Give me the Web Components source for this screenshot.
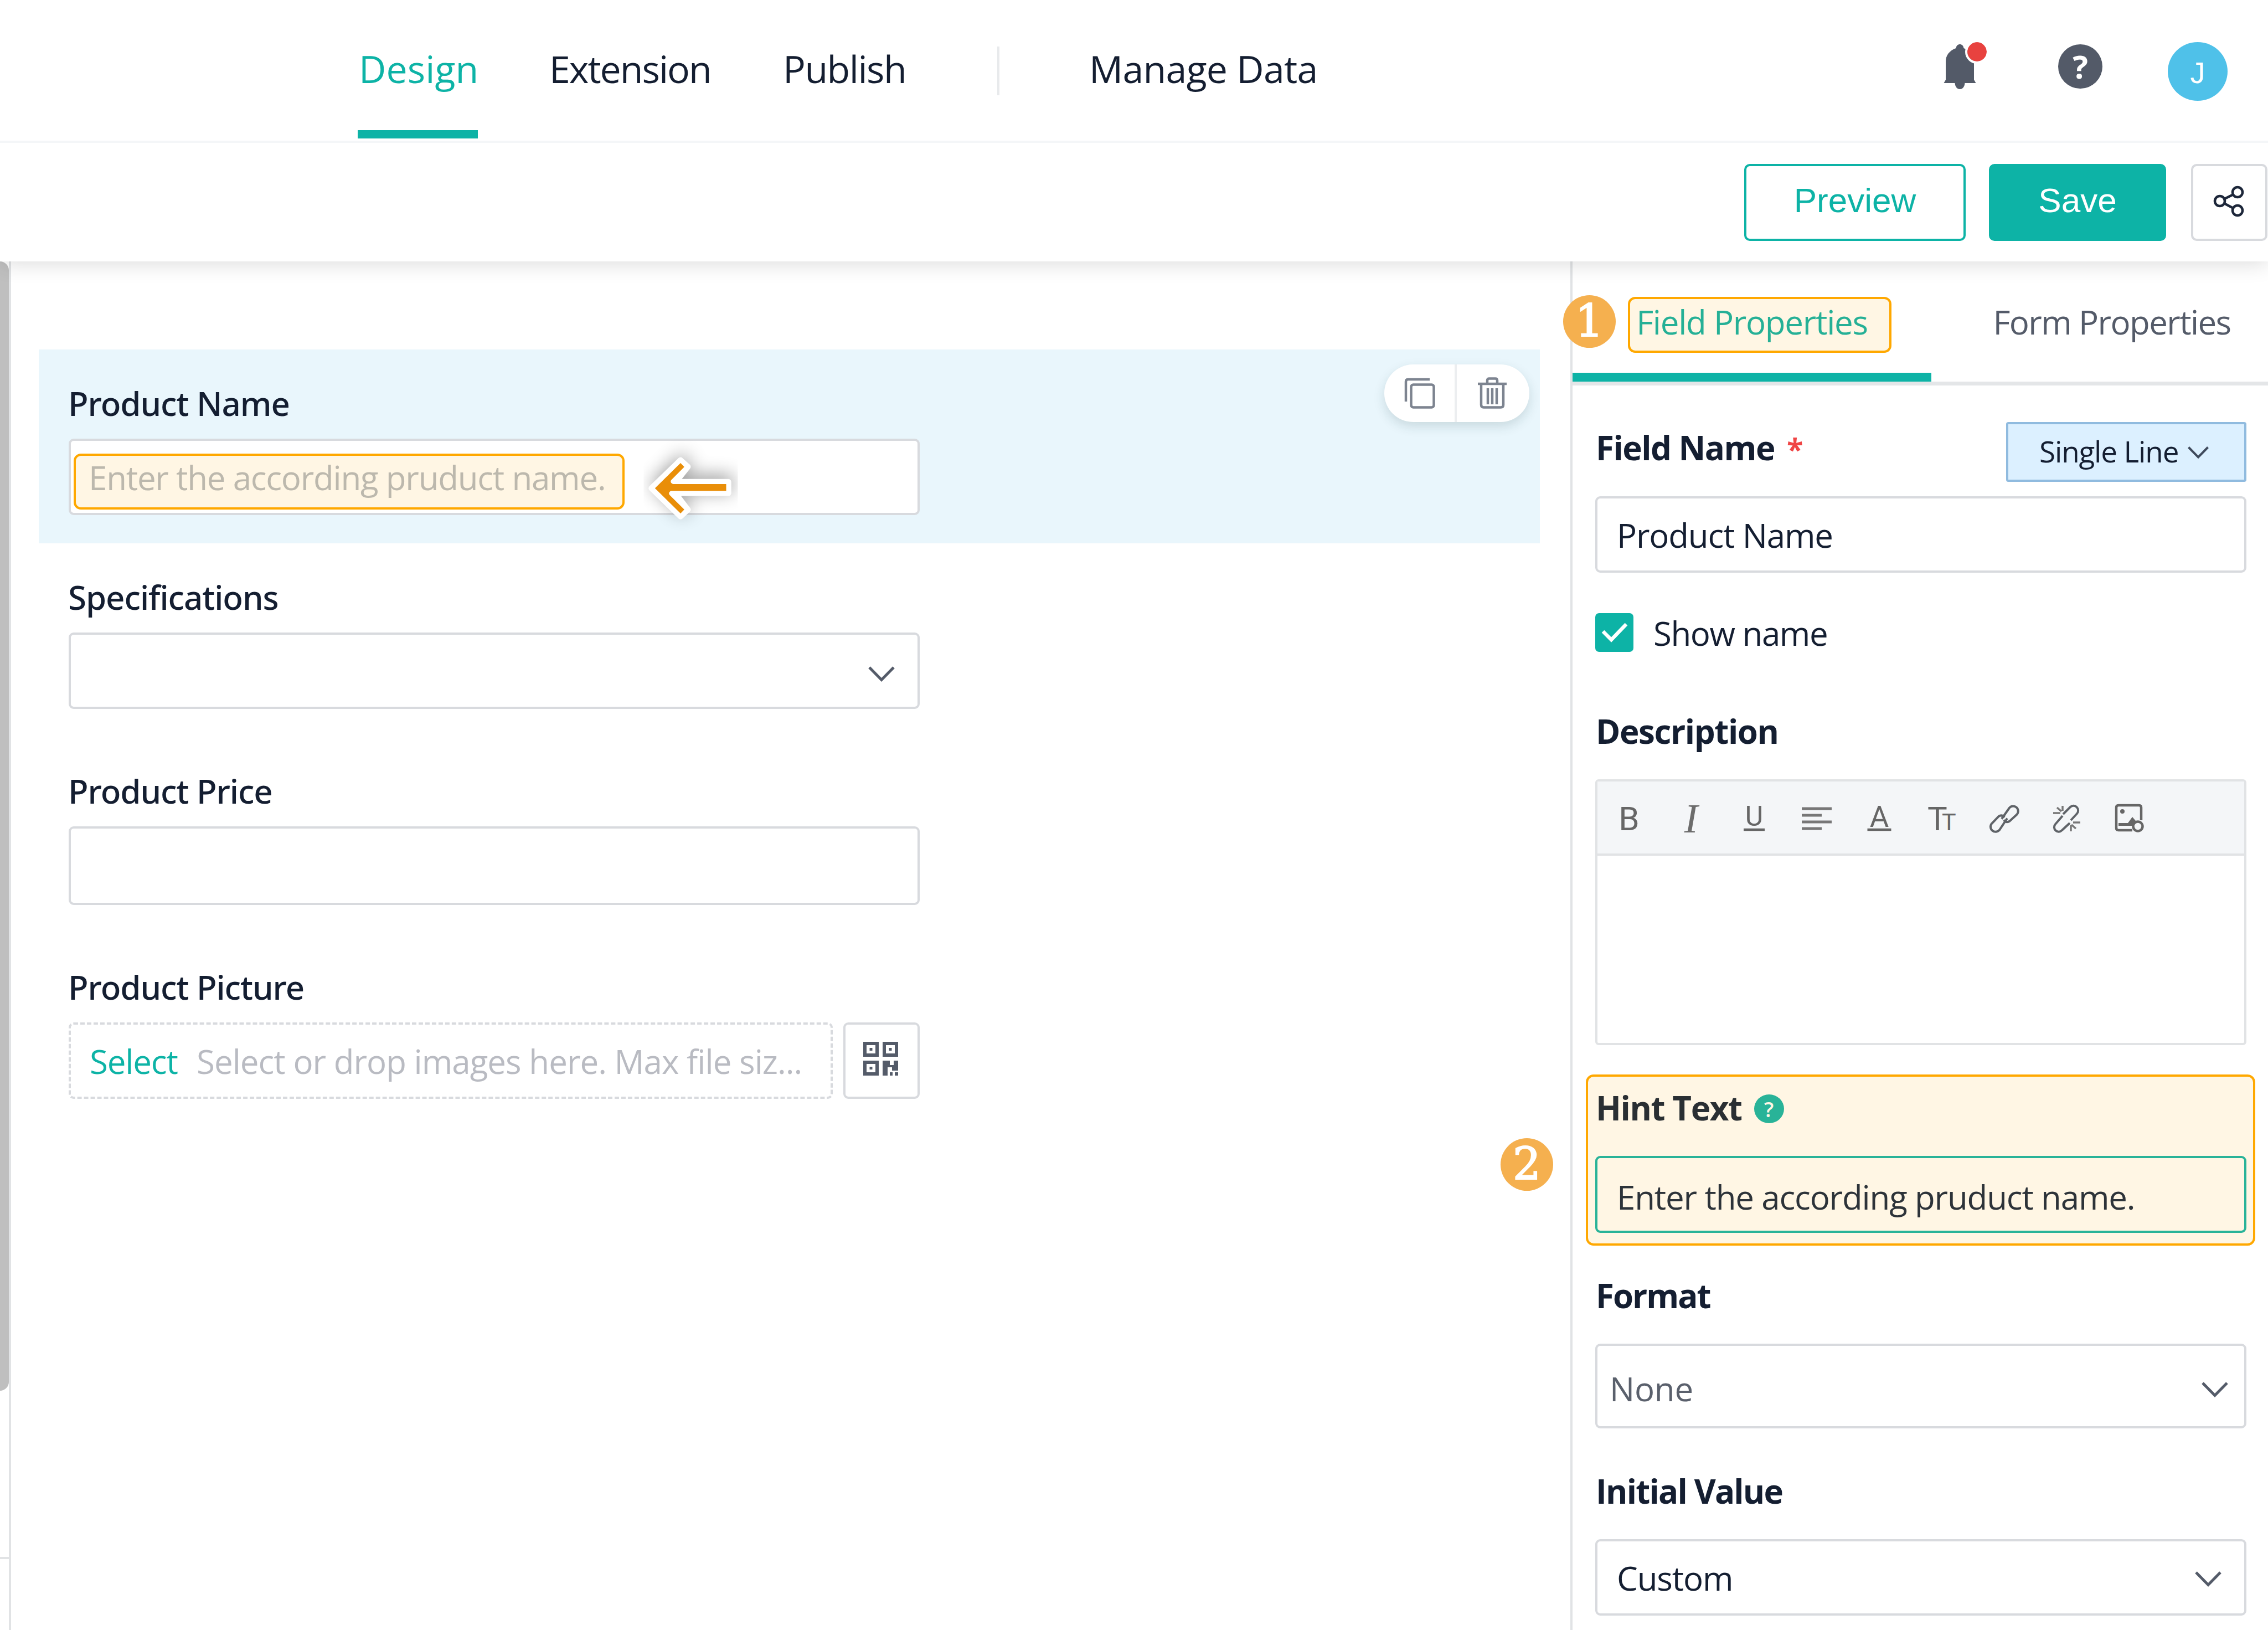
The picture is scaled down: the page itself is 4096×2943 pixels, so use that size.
<!DOCTYPE html>
<html lang="en">
<head>
<meta charset="utf-8">
<title>Form Designer</title>
<style>
  html, body {
    margin: 0;
    width: 4096px;
    height: 2943px;
    overflow: hidden;
    background: #fff;
  }

  body {
    font-family: "Open Sans", "Noto Sans", sans-serif;
    font-size: 60px;
    line-height: 82px;
    letter-spacing: -1.15px;
    color: #141e31;
    --accent: #0db3a6;
    --line: #e1e3e5;
    --border: #d8dade;
    --mark: #ffa800;
    --mark-fill: #fff6e4;
  }
</style>
</head>
<body>

<form-designer>
  <top-bar slot="header">
    <nav-tab active style="letter-spacing:.1px">Design</nav-tab>
    <nav-tab style="letter-spacing:-2px">Extension</nav-tab>
    <nav-tab style="letter-spacing:-1.5px">Publish</nav-tab>
    <nav-tab slot="extra" style="letter-spacing:-.7px">Manage Data</nav-tab>
  </top-bar>
  <action-bar slot="header"></action-bar>

  <side-rail slot="rail"></side-rail>

  <form-field slot="canvas" label="Product Name" selected>
    <text-box>
      <marked-text>Enter the according pruduct name.</marked-text>
    </text-box>
  </form-field>
  <form-field slot="canvas" label="Specifications">
    <text-box chevron="41 11"></text-box>
  </form-field>
  <form-field slot="canvas" label="Product Price">
    <text-box style="height:142px"></text-box>
  </form-field>
  <form-field slot="canvas" label="Product Picture">
    <image-upload></image-upload>
  </form-field>

  <property-panel slot="panel"></property-panel>
</form-designer>

<script>
// Icons: [width, height, markup], every one at its display size
const ICONS = {
  bell: [62, 82, `
    <path fill="#535a68" d="M32.500 0c3.500 0 6.500 2.500 7 7 12 4.500 18.500 13 18.500 24v33l3.500 6h-58L7 64V31C7 20 13.500 11.500 25.500 7c.5-4.500 3.500-7 7-7z"/>
    <path fill="#535a68" d="M23.500 70h18c-.5 6.500-4 11-9 11s-8.500-4.500-9-11z"/>`],
  share: [56, 58, `
    <g fill="none" stroke="#1d273a" stroke-width="4.500">
      <circle cx="12" cy="28" r="9"/><circle cx="44" cy="12" r="9"/><circle cx="44" cy="45" r="9"/>
      <path d="M20.500 24 35.500 16.500M20.500 32.500 35.500 40.500"/>
    </g>`],
  copy: [56, 56, `
    <g fill="none" stroke="#7d8490" stroke-width="4.500">
      <rect x="12.500" y="12.500" width="41" height="41" rx="4"/>
      <path d="M3 43V7q0-4 4-4h39"/>
    </g>`],
  trash: [52, 58, `
    <g fill="none" stroke="#7d8490" stroke-width="4.500">
      <path d="M0 12h52M17 11V6q0-3.500 3.500-3.500h11q3.500 0 3.500 3.500v5M6 13v37q0 4.500 4.500 4.500h31q4.500 0 4.500-4.500V13M18 20v29M26 20v29M34 20v29"/>
    </g>`],
  chevron: [48, 28, `<path d="M2 2 24 24.500 46 2" fill="none" stroke="#545b69" stroke-width="5"/>`],
  'chevron-small': [38, 22, `<path d="M1.500 1.500 19 19.500 36.500 1.500" fill="none" stroke="#3f4a5c" stroke-width="4"/>`],
  check: [52, 40, `<path d="M5 18 20 33 47 5" fill="none" stroke="#fff" stroke-width="6.500"/>`],
  qr: [64, 62, `
    <g fill="none" stroke="#545b69" stroke-width="6">
      <rect x="3" y="3" width="22" height="21"/><rect x="38" y="3" width="22" height="21"/><rect x="3" y="37" width="22" height="21"/>
    </g>
    <g fill="#545b69">
      <path d="M11.500 11h5v5h-5zM46.500 11h5v5h-5zM11.500 45h5v5h-5z"/>
      <path d="M35 34h13v8h7v-8h8v18H52v-6h-8v15h-9zM48 55h5v6h-5zM57 55h6v6h-6z"/>
    </g>`],
  bold: [56, 56, `<text x="28" y="49" font-family="Roboto" font-size="60" text-anchor="middle" fill="#666">B</text>`],
  italic: [56, 56, `<text x="27" y="53" font-family="Liberation Serif" font-style="italic" font-size="74" text-anchor="middle" fill="#6c6c6c">I</text>`],
  underline: [56, 56, `<text x="28" y="41" font-family="Roboto" font-size="50" text-anchor="middle" fill="#666">U</text>
    <path d="M9 48h38" stroke="#666" stroke-width="4.500"/>`],
  align: [56, 56, `<path d="M1 10h54M1 22h36M1 34h54M1 46h36" stroke="#777" stroke-width="5"/>`],
  color: [56, 56, `<text x="28" y="43" font-family="Roboto" font-size="53" text-anchor="middle" fill="#666">A</text>
    <path d="M6.500 48h43" stroke="#666" stroke-width="4.500"/>`],
  size: [56, 56, `<text x="2" y="49" font-family="Roboto" font-size="60" fill="#666">T</text>
    <text x="28" y="49" font-family="Roboto" font-size="43" fill="#666">T</text>`],
  link: [56, 56, `
    <g fill="none" stroke="#5f6368" stroke-width="4">
      <path d="M23 28.500 37 8.500a9 9 0 0 1 13.500 12L37.500 32.500q-6 4-10.500-2"/>
      <path d="M33 27.500 19 48.500a9 9 0 0 1-14-11.500L17.500 24q6-4 10.500 2"/>
    </g>`],
  unlink: [56, 56, `
    <g fill="none" stroke="#5f6368" stroke-width="4">
      <path d="M21 20 34 7a8.500 8.500 0 0 1 12 12L35 31"/>
      <path d="M20 23 7 38a8 8 0 0 0 12 11L33 36"/>
    </g>
    <path d="M18 15 10 8M20 5v9M3 18h13M36 39l8 7M39 35h13M35 40v11" fill="none" stroke="#777" stroke-width="3.500"/>`],
  picture: [56, 56, `
    <g fill="none" stroke="#666" stroke-width="4.500">
      <path d="M33 49H8q-4 0-4-4V8q0-4 4-4h37q4 0 4 4v23"/>
      <circle cx="43" cy="42" r="8.500"/>
    </g>
    <circle cx="15" cy="15" r="4" fill="#666"/>
    <path d="M8 36h17l8-11 6 7-6 9H8z" fill="#666"/>`]
};

// Attach an open shadow root and fill it
function render(host, html) {
  host.attachShadow({ mode: 'open' }).innerHTML = html;
}

class UiIcon extends HTMLElement {
  connectedCallback() {
    const [w, h, body] = ICONS[this.getAttribute('name')];
    render(this, `
      <style>
        :host { display: block; flex: none; letter-spacing: 0; }
        svg { display: block; overflow: visible; }
      </style>
      <svg width="${w}" height="${h}" viewBox="0 0 ${w} ${h}">${body}</svg>`);
  }
}

class FormDesigner extends HTMLElement {
  constructor() {
    super();
    render(this, `
      <style>
        :host { display: flex; flex-direction: column; height: 2943px; }
        header { position: relative; z-index: 1; }
        main { flex: 1; display: flex; min-height: 0; }
        section {
          flex: 1;
          box-sizing: border-box;
          padding: 159px 55px 0 50px;
        }
      </style>
      <header><slot name="header"></slot></header>
      <main>
        <slot name="rail"></slot>
        <section><slot name="canvas"></slot></section>
        <slot name="panel"></slot>
      </main>`);
  }
}

class TopBar extends HTMLElement {
  constructor() {
    super();
    render(this, `
      <style>
        :host {
          display: flex;
          box-sizing: border-box;
          height: 258px;
          padding: 0 73px 0 646px;
          border-bottom: 4px solid #f4f6f8;
          background: #fff;
          position: relative;
          z-index: 1;
        }
        nav { display: grid; grid-template-columns: 345px 422px 388px 165px auto; }
        i { width: 4px; height: 88px; margin-top: 84px; background: #e8eaec; }
        .tools { display: flex; align-items: flex-start; margin-left: auto; letter-spacing: 0; }
        .bell { position: relative; margin-top: 80px; }
        .bell b {
          position: absolute;
          left: 46px;
          top: -4px;
          width: 35px;
          height: 35px;
          border-radius: 50%;
          background: #e8423f;
          outline: 4px solid #fff;
        }
        .help {
          width: 80px;
          height: 80px;
          margin: 80px 118px 0 148px;
          border-radius: 50%;
          background: #535a68;
          color: #fff;
          font: 700 58px/80px "Open Sans", sans-serif;
          text-align: center;
        }
        .avatar {
          width: 108px;
          height: 106px;
          margin-top: 76px;
          border-radius: 50%;
          background: #4fc1e9;
          color: #fff;
          font: 54px/110px "Liberation Sans", sans-serif;
          text-align: center;
        }
      </style>
      <nav><slot></slot><i></i><slot name="extra"></slot></nav>
      <div class="tools">
        <div class="bell"><ui-icon name="bell"></ui-icon><b></b></div>
        <div class="help">?</div>
        <div class="avatar">J</div>
      </div>`);
  }
}

class NavTab extends HTMLElement {
  constructor() {
    super();
    render(this, `
      <style>
        :host {
          display: block;
          width: max-content;
          box-sizing: border-box;
          height: 250px;
          padding-top: 78px;
          font-size: 68px;
          line-height: 92px;
          white-space: nowrap;
          text-indent: 1px;
        }
        :host([active]) {
          width: 217px;
          border-bottom: 15px solid var(--accent);
          color: var(--accent);
          text-indent: 2px;
        }
      </style>
      <slot></slot>`);
  }
}

class ActionBar extends HTMLElement {
  constructor() {
    super();
    render(this, `
      <style>
        :host {
          display: flex;
          justify-content: flex-end;
          box-sizing: border-box;
          height: 214px;
          padding: 38px 1px 0 0;
          background: #fff;
          box-shadow: 0 4px 36px rgba(0, 0, 0, .14);
          font: 62px/124px "Liberation Sans", sans-serif;
          letter-spacing: 0;
        }
        div {
          box-sizing: border-box;
          height: 139px;
          border: 4px solid var(--accent);
          border-radius: 10px;
          text-align: center;
        }
        .preview { width: 400px; margin-right: 42px; color: var(--accent); }
        .save { width: 320px; margin-right: 45px; background: var(--accent); color: #fff; }
        .share { width: 138px; padding: 35px 0 0 36px; border-color: var(--border); }
      </style>
      <div class="preview">Preview</div>
      <div class="save">Save</div>
      <div class="share"><ui-icon name="share"></ui-icon></div>`);
  }
}

// Left sliver of the widget list: its scrollbar and its edge
class SideRail extends HTMLElement {
  constructor() {
    super();
    render(this, `
      <style>
        :host {
          display: block;
          box-sizing: border-box;
          width: 20px;
          border-right: 4px solid var(--line);
        }
        .thumb { height: 2039px; border-radius: 0 16px 16px 0; background: #bfbfbf; }
        .rule { height: 4px; margin-top: 300px; background: var(--line); }
      </style>
      <div class="thumb"></div>
      <div class="rule"></div>`);
  }
}

class FormField extends HTMLElement {
  constructor() {
    super();
    render(this, `
      <style>
        :host { display: block; position: relative; padding: 56px 54px 51px 54px; }
        :host([selected]) { background: #e9f6fc; }
        label {
          display: block;
          margin: 0 0 23px -1px;
          font-family: "Noto Sans", sans-serif;
          font-weight: 500;
          letter-spacing: -1.050px;
        }
        .body { width: 1537px; }
        .tools {
          display: none;
          position: absolute;
          right: 19px;
          top: 27px;
          width: 262px;
          height: 104px;
          border-radius: 52px;
          background: #fff;
          box-shadow: 0 8px 20px rgba(20, 60, 60, .15);
        }
        :host([selected]) .tools { display: flex; }
        .tools span { flex: 1; display: flex; align-items: center; justify-content: center; }
        .tools span + span { border-left: 4px solid #eceef0; padding-right: 4px; }
      </style>
      <label></label>
      <div class="body"><slot></slot></div>
      <div class="tools">
        <span><ui-icon name="copy"></ui-icon></span>
        <span><ui-icon name="trash"></ui-icon></span>
      </div>`);
  }

  connectedCallback() {
    this.shadowRoot.querySelector('label').textContent = this.getAttribute('label');
  }
}

class TextBox extends HTMLElement {
  connectedCallback() {
    // chevron="<right inset> <downward shift>"
    const chevron = this.getAttribute('chevron');
    const [right, down] = chevron ? chevron.split(' ') : [0, 0];
    render(this, `
      <style>
        :host {
          display: flex;
          align-items: center;
          position: relative;
          box-sizing: border-box;
          height: 138px;
          padding-left: 35px;
          border: 4px solid var(--border);
          border-radius: 9px;
          background: #fff;
        }
        .value { padding-top: var(--drop, 2px); }
        ui-icon { margin: ${down}px ${right}px 0 auto; }
      </style>
      <div class="value"><slot></slot></div>
      ${chevron ? '<ui-icon name="chevron"></ui-icon>' : ''}`);
  }
}

// Placeholder under an orange marker, with an arrow that points at it
class MarkedText extends HTMLElement {
  constructor() {
    super();
    render(this, `
      <style>
        :host { display: block; margin-left: -3px; color: #bcb8ad; letter-spacing: -1.210px; }
        .mark {
          position: absolute;
          left: 5px;
          top: 23px;
          width: 995px;
          height: 101px;
          box-sizing: border-box;
          border: 4px solid var(--mark);
          border-radius: 13px;
          background: var(--mark-fill);
        }
        span { position: relative; white-space: nowrap; }
        svg { position: absolute; left: 1006px; top: -40px; }
      </style>
      <div class="mark"></div>
      <span><slot></slot></span>
      <svg width="236.300" height="236.300" viewBox="0 0 900 900">
        <defs>
          <filter id="soft" x="-50%" y="-50%" width="200%" height="200%"><feGaussianBlur stdDeviation="62"/></filter>
          <clipPath id="tile"><rect x="108" y="40" width="648" height="780"/></clipPath>
        </defs>
        <g clip-path="url(#tile)">
          <path d="M362 265 142 478 362 692 432 625 345 531H711V414H356L432 330Z" fill="#000" opacity=".4" filter="url(#soft)" transform="translate(10 -25)"/>
        </g>
        <path d="M362 285 162 478 362 672 412 625 325 511H691V434H330L412 330Z" fill="#fff" stroke="#fff" stroke-width="40" stroke-linejoin="round"/>
        <path d="M362 305 186 478 362 651 388 625 287 525Q275 508 296 496H676V449H310Q288 440 297 423L388 331Z" fill="#e98e08"/>
      </svg>`);
  }
}

class ImageUpload extends HTMLElement {
  constructor() {
    super();
    render(this, `
      <style>
        :host { display: flex; gap: 19px; height: 138px; }
        .drop {
          display: flex;
          align-items: center;
          box-sizing: border-box;
          width: 1380px;
          padding: 1px 0 0 34px;
          border: 4px dashed var(--border);
          border-radius: 9px;
          white-space: nowrap;
        }
        .pick { width: 193px; color: var(--accent); }
        .note { color: #b9bbc2; letter-spacing: -.960px; }
        .code {
          box-sizing: border-box;
          width: 138px;
          padding: 31px 0 0 32px;
          border: 4px solid var(--border);
          border-radius: 9px;
        }
      </style>
      <div class="drop">
        <span class="pick">Select</span>
        <span class="note">Select or drop images here. Max file siz...</span>
      </div>
      <div class="code"><ui-icon name="qr"></ui-icon></div>`);
  }
}

class StepBadge extends HTMLElement {
  constructor() {
    super();
    render(this, `
      <style>
        :host {
          display: block;
          position: absolute;
          width: 95px;
          height: 95px;
          border-radius: 50%;
          background: #f5b04f;
          color: #fff;
          font: 80px/94px "DejaVu Serif", serif;
          letter-spacing: 0;
          -webkit-text-stroke: 2px #fff;
          text-align: center;
        }
      </style>
      <slot></slot>`);
  }
}

class PropertyGroup extends HTMLElement {
  constructor() {
    super();
    render(this, `
      <style>
        :host { display: block; position: relative; margin-top: 72px; }
        header {
          display: flex;
          align-items: center;
          position: relative;
          margin-bottom: 46px;
          padding-left: 1px;
          font-weight: 700;
          letter-spacing: -1.400px;
        }
        .body { position: relative; }
        .mark { display: none; }
        :host([marked]) .mark {
          display: block;
          position: absolute;
          left: -17px;
          top: -19px;
          width: 1209px;
          height: 309px;
          box-sizing: border-box;
          border: 4px solid var(--mark);
          border-radius: 14px;
          background: var(--mark-fill);
        }
      </style>
      <div class="mark"></div>
      <header><slot name="label"></slot></header>
      <div class="body"><slot></slot></div>`);
  }
}

class RichEditor extends HTMLElement {
  constructor() {
    super();
    const tools = ['bold', 'italic', 'underline', 'align', 'color', 'size', 'link', 'unlink', 'picture'];
    render(this, `
      <style>
        :host {
          display: block;
          box-sizing: border-box;
          height: 480px;
          border: 4px solid var(--line);
          border-radius: 6px;
        }
        .bar {
          display: flex;
          gap: 57px;
          box-sizing: border-box;
          height: 134px;
          padding: 39px 0 0 29px;
          border-bottom: 4px solid var(--line);
          background: #f4f6f8;
        }
      </style>
      <div class="bar">${tools.map((name) => `<ui-icon name="${name}"></ui-icon>`).join('')}</div>`);
  }
}

class PropertyPanel extends HTMLElement {
  constructor() {
    super();
    render(this, `
      <style>
        :host {
          display: block;
          position: relative;
          box-sizing: border-box;
          width: 1260px;
          border-left: 4px solid var(--line);
        }
        .tabs {
          display: flex;
          box-sizing: border-box;
          height: 224px;
          border-bottom: 7px solid #e4e6e8;
        }
        .tab {
          flex: none;
          position: relative;
          width: 652px;
          line-height: 219px;
          text-align: center;
          white-space: nowrap;
          color: #545b69;
          letter-spacing: -1.600px;
        }
        .tab.on { width: 648px; color: #25b096; letter-spacing: -1.250px; }
        .tab.on::after {
          content: "";
          position: absolute;
          left: 0;
          right: 0;
          bottom: 0;
          height: 16px;
          background: var(--accent);
        }
        .tab i {
          position: absolute;
          left: 100px;
          top: 64px;
          width: 476px;
          height: 101px;
          box-sizing: border-box;
          border: 4px solid var(--mark);
          border-radius: 13px;
          background: var(--mark-fill);
        }
        .tab span { position: relative; }
        .body { padding: 66px 39px 0 41px; }
        .name { display: flex; justify-content: space-between; height: 108px; margin-bottom: 26px; font-weight: 700; }
        .name span { margin: 5px 0 0 1px; letter-spacing: -1.500px; }
        .name em { margin-left: 22px; color: #f04545; font-style: normal; font-size: 54px; }
        .kind {
          display: flex;
          align-items: center;
          box-sizing: border-box;
          width: 434px;
          padding: 0 0 2px 56px;
          border: 4px solid #90bbdf;
          border-radius: 4px;
          background: #dcf0ff;
          font-size: 53px;
          font-weight: 400;
          white-space: nowrap;
        }
        .kind ui-icon { margin: 3px 64px 0 auto; }
        .show { display: flex; align-items: center; height: 70px; margin: 73px 0 100px; }
        .show b { font-weight: 400; letter-spacing: -1.450px; padding-top: 2px; }
        .box {
          display: flex;
          align-items: center;
          justify-content: center;
          width: 69px;
          height: 70px;
          margin-right: 36px;
          border-radius: 7px;
          background: var(--accent);
        }
        property-group:first-of-type { margin-top: 102px; }
        .q {
          width: 54px;
          height: 52px;
          margin: 3px 0 0 22px;
          border-radius: 50%;
          background: #29b398;
          color: #fff6e4;
          font: 600 38px/52px "Open Sans", sans-serif;
          letter-spacing: 0;
          text-align: center;
        }
        .hint { --drop: 8px; border-color: #29b398; background: var(--mark-fill); height: 139px; }
        .none { --drop: 9px; height: 153px; padding-left: 22px; color: #5a606c; }
      </style>
      <div class="tabs">
        <div class="tab on"><i></i><span>Field Properties</span></div>
        <div class="tab">Form Properties</div>
      </div>
      <div class="body">
        <div class="name">
          <span>Field Name<em>*</em></span>
          <div class="kind">Single Line<ui-icon name="chevron-small"></ui-icon></div>
        </div>
        <text-box>Product Name</text-box>
        <div class="show"><div class="box"><ui-icon name="check"></ui-icon></div><b>Show name</b></div>
        <property-group>
          <span slot="label">Description</span>
          <rich-editor></rich-editor>
        </property-group>
        <property-group marked>
          <span slot="label" style="color:#2a2f33">Hint Text</span><div class="q" slot="label">?</div>
          <text-box class="hint" style="color:#2d3339">Enter the according pruduct name.</text-box>
        </property-group>
        <property-group>
          <span slot="label" style="letter-spacing:-2px">Format</span>
          <text-box class="none" chevron="29 13" style="letter-spacing:-.2px">None</text-box>
        </property-group>
        <property-group>
          <span slot="label" style="letter-spacing:-1.8px">Initial Value</span>
          <text-box chevron="41 5">Custom</text-box>
        </property-group>
      </div>
      <step-badge style="left:-17px;top:61px">1</step-badge>
      <step-badge style="left:-130px;top:1583px">2</step-badge>`);
  }
}

customElements.define('ui-icon', UiIcon);
customElements.define('form-designer', FormDesigner);
customElements.define('top-bar', TopBar);
customElements.define('nav-tab', NavTab);
customElements.define('action-bar', ActionBar);
customElements.define('side-rail', SideRail);
customElements.define('form-field', FormField);
customElements.define('text-box', TextBox);
customElements.define('marked-text', MarkedText);
customElements.define('image-upload', ImageUpload);
customElements.define('step-badge', StepBadge);
customElements.define('property-group', PropertyGroup);
customElements.define('rich-editor', RichEditor);
customElements.define('property-panel', PropertyPanel);
</script>
</body>
</html>
